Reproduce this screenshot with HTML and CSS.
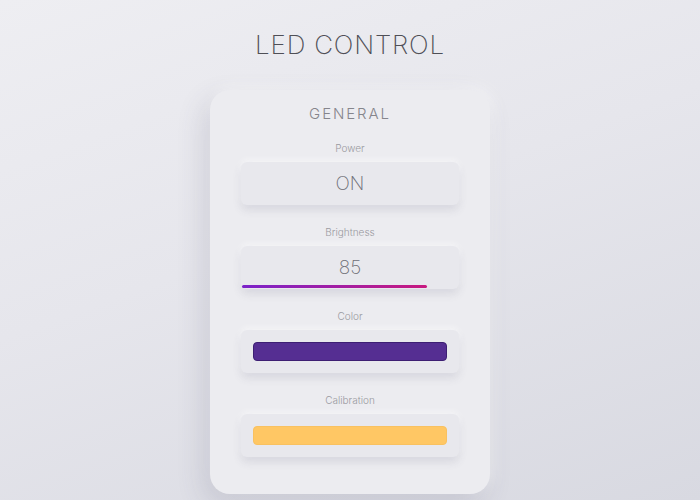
FILE: index.html
```html
<!DOCTYPE html>
<html>
<head>
<meta charset="utf-8">
<link rel="stylesheet" href="styles.css">
</head>
<body>
<div class="page">
  <h1 class="title">LED CONTROL</h1>
  <div class="card">
    <h2 class="card-title">GENERAL</h2>
    <div class="section">
      <div class="label">Power</div>
      <div class="box"><span class="value">ON</span></div>
    </div>
    <div class="section">
      <div class="label">Brightness</div>
      <div class="box box-progress"><span class="value">85</span><div class="progress" style="width:85%"></div></div>
    </div>
    <div class="section">
      <div class="label">Color</div>
      <div class="box box-swatch"><div class="swatch swatch-purple"></div></div>
    </div>
    <div class="section">
      <div class="label">Calibration</div>
      <div class="box box-swatch"><div class="swatch swatch-yellow"></div></div>
    </div>
  </div>
</div>
</body>
</html>
```
FILE: styles.css
```css
html, body {
  margin: 0;
  padding: 0;
  height: 100%;
}
body {
  background: linear-gradient(160deg, #eeeef2 0%, #e6e6ec 45%, #d8d9e1 100%);
  font-family: Inter, "Liberation Sans", sans-serif;
  overflow: hidden;
}
.page {
  display: flex;
  flex-direction: column;
  align-items: center;
  padding-top: 29px;
}
.title {
  margin: 0;
  font-size: 26px;
  line-height: 32px;
  font-weight: 200;
  letter-spacing: 0.8px;
  color: #4f4f56;
}
.card {
  margin-top: 29px;
  width: 280px;
  box-sizing: border-box;
  padding: 14px 31px 37px;
  background: #ececf0;
  border-radius: 20px;
  box-shadow: -6px 10px 28px rgba(70, 70, 100, 0.16), 4px -4px 14px rgba(255,255,255,0.5);
  display: flex;
  flex-direction: column;
  gap: 20px;
}
.card-title {
  margin: 0 0 -3px;
  text-align: center;
  font-size: 15px;
  line-height: 20px;
  font-weight: 300;
  letter-spacing: 1.9px;
  color: #85858c;
}
.section {
  display: flex;
  flex-direction: column;
  align-items: stretch;
  gap: 7px;
}
.label {
  text-align: center;
  font-size: 10px;
  line-height: 14px;
  font-weight: 300;
  color: #9a9aa0;
}
.box {
  position: relative;
  height: 43px;
  border-radius: 6px;
  background: #e8e8ed;
  box-shadow: 0 5px 9px rgba(80, 80, 110, 0.13), 0 -2px 6px rgba(255,255,255,0.6);
  display: flex;
  align-items: center;
  justify-content: center;
  box-sizing: border-box;
}
.value {
  font-size: 19px;
  font-weight: 200;
  color: #6e6e76;
}
.progress {
  position: absolute;
  left: 1px;
  bottom: 1px;
  height: 3px;
  border-radius: 2px;
  background: linear-gradient(90deg, #7b22c9, #c81a80);
}
.box-swatch {
  padding: 12px;
}
.swatch {
  width: 100%;
  height: 19px;
  border-radius: 4px;
  box-sizing: border-box;
}
.swatch-purple {
  background: #552e92;
  border: 1px solid #3d1f73;
}
.swatch-yellow {
  background: #ffc764;
  border: 1px solid #f9c160;
}
```
